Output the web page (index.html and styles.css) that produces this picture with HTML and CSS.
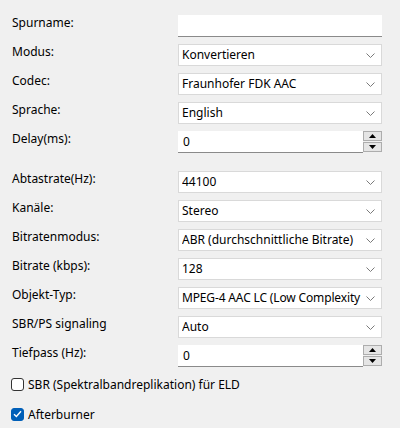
FILE: index.html
```html
<!DOCTYPE html>
<html>
<head>
<meta charset="utf-8">
<link rel="stylesheet" href="styles.css">
</head>
<body>
<div class="form">
  <div class="group">
    <div class="row"><span class="label">Spurname:</span><div class="textbox"></div></div>
    <div class="row"><span class="label">Modus:</span><div class="combo"><span>Konvertieren</span><svg class="chev" width="9" height="5" viewBox="0 0 9 5"><path d="M0.5 0.5 L4.5 4.5 L8.5 0.5" fill="none" stroke="#7a7a7a" stroke-width="1"/></svg></div></div>
    <div class="row"><span class="label">Codec:</span><div class="combo"><span>Fraunhofer FDK AAC</span><svg class="chev" width="9" height="5" viewBox="0 0 9 5"><path d="M0.5 0.5 L4.5 4.5 L8.5 0.5" fill="none" stroke="#7a7a7a" stroke-width="1"/></svg></div></div>
    <div class="row"><span class="label">Sprache:</span><div class="combo"><span>English</span><svg class="chev" width="9" height="5" viewBox="0 0 9 5"><path d="M0.5 0.5 L4.5 4.5 L8.5 0.5" fill="none" stroke="#7a7a7a" stroke-width="1"/></svg></div></div>
    <div class="row"><span class="label">Delay(ms):</span><div class="spin"><div class="spinfield">0</div><div class="spinbtns"><div class="sbtn"><svg width="7" height="4" viewBox="0 0 7 4"><path d="M3.5 0 L7 4 L0 4 Z" fill="#000"/></svg></div><div class="sbtn"><svg width="7" height="4" viewBox="0 0 7 4"><path d="M0 0 L7 0 L3.5 4 Z" fill="#000"/></svg></div></div></div></div>
  </div>
  <div class="group second">
    <div class="row"><span class="label">Abtastrate(Hz):</span><div class="combo"><span>44100</span><svg class="chev" width="9" height="5" viewBox="0 0 9 5"><path d="M0.5 0.5 L4.5 4.5 L8.5 0.5" fill="none" stroke="#7a7a7a" stroke-width="1"/></svg></div></div>
    <div class="row"><span class="label">Kanäle:</span><div class="combo"><span>Stereo</span><svg class="chev" width="9" height="5" viewBox="0 0 9 5"><path d="M0.5 0.5 L4.5 4.5 L8.5 0.5" fill="none" stroke="#7a7a7a" stroke-width="1"/></svg></div></div>
    <div class="row"><span class="label">Bitratenmodus:</span><div class="combo"><span>ABR (durchschnittliche Bitrate)</span><svg class="chev" width="9" height="5" viewBox="0 0 9 5"><path d="M0.5 0.5 L4.5 4.5 L8.5 0.5" fill="none" stroke="#7a7a7a" stroke-width="1"/></svg></div></div>
    <div class="row"><span class="label">Bitrate (kbps):</span><div class="combo"><span>128</span><svg class="chev" width="9" height="5" viewBox="0 0 9 5"><path d="M0.5 0.5 L4.5 4.5 L8.5 0.5" fill="none" stroke="#7a7a7a" stroke-width="1"/></svg></div></div>
    <div class="row"><span class="label">Objekt-Typ:</span><div class="combo"><span class="tight">MPEG-4 AAC LC (Low Complexity</span><svg class="chev" width="9" height="5" viewBox="0 0 9 5"><path d="M0.5 0.5 L4.5 4.5 L8.5 0.5" fill="none" stroke="#7a7a7a" stroke-width="1"/></svg></div></div>
    <div class="row"><span class="label">SBR/PS signaling</span><div class="combo"><span>Auto</span><svg class="chev" width="9" height="5" viewBox="0 0 9 5"><path d="M0.5 0.5 L4.5 4.5 L8.5 0.5" fill="none" stroke="#7a7a7a" stroke-width="1"/></svg></div></div>
    <div class="row"><span class="label">Tiefpass (Hz):</span><div class="spin"><div class="spinfield">0</div><div class="spinbtns"><div class="sbtn"><svg width="7" height="4" viewBox="0 0 7 4"><path d="M3.5 0 L7 4 L0 4 Z" fill="#000"/></svg></div><div class="sbtn"><svg width="7" height="4" viewBox="0 0 7 4"><path d="M0 0 L7 0 L3.5 4 Z" fill="#000"/></svg></div></div></div></div>
  </div>
  <div class="checks">
    <label class="check"><span class="box"></span><span>SBR (Spektralbandreplikation) für ELD</span></label>
    <label class="check"><span class="box checked"><svg width="9" height="8" viewBox="0 0 9 8"><path d="M1 4.2 L3.4 6.5 L8 1.2" fill="none" stroke="#fff" stroke-width="1.4"/></svg></span><span>Afterburner</span></label>
  </div>
</div>
</body>
</html>
```
FILE: styles.css
```css
html, body {
  margin: 0;
  padding: 0;
  background: #f0f0f0;
}
body {
  font-family: "Noto Sans", "Open Sans", sans-serif;
  font-size: 12px;
  color: #000;
  width: 400px;
  height: 428px;
  overflow: hidden;
}
.form {
  padding: 15px 0 0 12px;
  display: flex;
  flex-direction: column;
}
.group {
  display: flex;
  flex-direction: column;
  gap: 7px;
}
.second {
  margin-top: 18px;
}
.row {
  display: grid;
  grid-template-columns: 166px 204px;
  height: 22px;
  align-items: start;
}
.label {
  line-height: 16px;
  white-space: nowrap;
}
.textbox {
  height: 21px;
  background: #fff;
  border-bottom: 1px solid #8a8a8a;
}
.combo {
  height: 20px;
  background: #fff;
  border: 1px solid #d9d9d9;
  display: flex;
  align-items: center;
  padding: 0 6px 0 3px;
  line-height: 20px;
  overflow: hidden;
}
.combo span {
  flex: 1;
  white-space: nowrap;
  overflow: hidden;
}
.combo .tight {
  letter-spacing: -0.15px;
}
.chev {
  flex: none;
  margin-left: 3px;
  margin-top: 1px;
}
.spin {
  display: flex;
  height: 22px;
}
.spinfield {
  flex: 1;
  height: 21px;
  background: #fff;
  border-bottom: 1px solid #8a8a8a;
  line-height: 22px;
  padding-left: 5px;
}
.spinbtns {
  width: 19px;
  display: flex;
  flex-direction: column;
  gap: 1px;
}
.sbtn {
  height: 8px;
  background: #e5e5e5;
  border: 1px solid #adadad;
  display: flex;
  align-items: center;
  justify-content: center;
}
.checks {
  margin-top: 7px;
  display: flex;
  flex-direction: column;
  gap: 10px;
  margin-left: -1px;
}
.check {
  display: flex;
  align-items: center;
  height: 20px;
  gap: 4px;
}
.box {
  width: 11px;
  height: 11px;
  border: 1px solid #333;
  border-radius: 3px;
  background: #fff;
  display: flex;
  align-items: center;
  justify-content: center;
}
.box.checked {
  background: #005fb8;
  border-color: #005fb8;
}
```
